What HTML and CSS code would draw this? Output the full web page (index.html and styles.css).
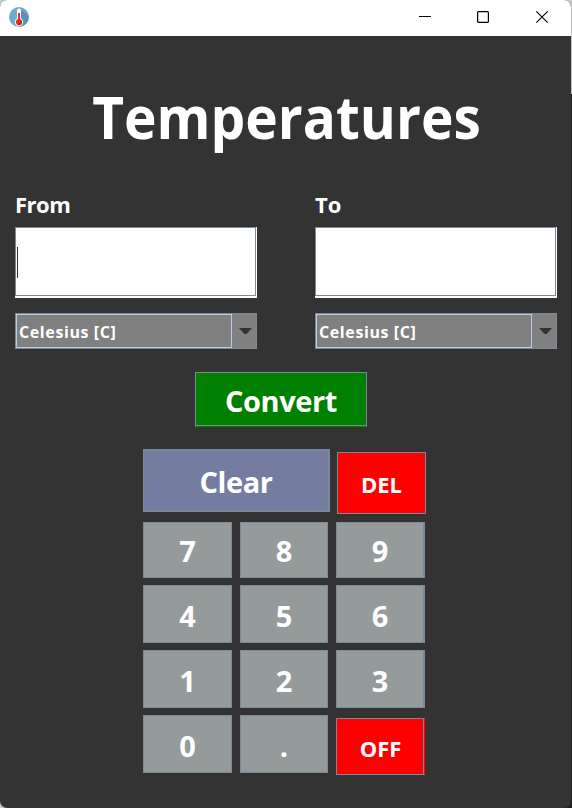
FILE: index.html
```html
<!DOCTYPE html>
<html lang="en">
<head>
<meta charset="utf-8">
<title>Temperatures</title>
<link rel="stylesheet" href="styles.css">
</head>
<body>
<div class="window">
  <header class="titlebar">
    <svg class="app-icon" width="20" height="20" viewBox="0 0 20 20">
      <circle cx="10" cy="10" r="10" fill="#6fabd0"/>
      <path d="M12 2 L19.5 9 A10 10 0 0 1 12 19.8 Z" fill="#5793b7"/>
      <path d="M8 3.500a2 2 0 0 1 4 0V12H8z" fill="#fff"/>
      <circle cx="10" cy="15" r="4" fill="#fff"/>
      <path d="M9 6h2v8H9z" fill="#e0301e"/>
      <circle cx="10" cy="15" r="3.100" fill="#e0301e"/>
      <path d="M12.700 13.500a3.100 3.100 0 0 1-4.200 4.200z" fill="#b82a1b"/>
    </svg>
    <svg class="controls" width="132" height="14" viewBox="0 0 132 14" fill="none" stroke="#000">
      <path d="M0 6.500H12" shape-rendering="crispEdges"/>
      <rect x="58.600" y="1.600" width="10.800" height="10.800" rx="1" stroke-width="1.200"/>
      <path d="M117.300 1.300 128.700 12.700M128.700 1.300 117.300 12.700" stroke-width="1.100"/>
    </svg>
  </header>
  <main class="content">
    <h1 class="title"><span>Temperatures</span></h1>
    <div class="units">
      <section class="unit">
        <label class="label from">From</label>
        <div class="field"><i class="caret"></i></div>
        <div class="combo"><span class="value">Celesius [C]</span><span class="drop"><svg width="13" height="6" viewBox="0 0 13 6"><path d="M0 0h13L7.500 6h-2z" fill="#333"/></svg></span></div>
      </section>
      <section class="unit">
        <label class="label to">To</label>
        <div class="field"></div>
        <div class="combo"><span class="value">Celesius [C]</span><span class="drop"><svg width="13" height="6" viewBox="0 0 13 6"><path d="M0 0h13L7.500 6h-2z" fill="#333"/></svg></span></div>
      </section>
    </div>
    <button class="btn convert"><span>Convert</span></button>
    <div class="actions">
      <button class="btn clear"><span>Clear</span></button>
      <button class="btn red del"><span>DEL</span></button>
    </div>
    <div class="keypad">
      <button class="btn key">7</button><button class="btn key">8</button><button class="btn key edge">9</button>
      <button class="btn key">4</button><button class="btn key">5</button><button class="btn key edge">6</button>
      <button class="btn key">1</button><button class="btn key">2</button><button class="btn key edge">3</button>
      <button class="btn key">0</button><button class="btn key">.</button><button class="btn red off"><span>OFF</span></button>
    </div>
  </main>
</div>
</body>
</html>
```
FILE: styles.css
```css
* { box-sizing: border-box; }
body {
  margin: 0;
  height: 808px;
  overflow: hidden;
  background: linear-gradient(90deg, #c8c8c8 0 560px, transparent 560px), linear-gradient(#c4c4c4 0 94px, #201e1e 94px);
  font-family: "Open Sans", "Noto Sans", sans-serif;
  font-weight: 700;
  color: #fff;
}
.window {
  width: 571px;
  height: 808px;
  border-radius: 7px;
  overflow: hidden;
  background: #333;
}
.titlebar {
  height: 36px;
  padding: 0 20px 0 9px;
  display: flex;
  align-items: center;
  justify-content: space-between;
  background: #fff;
}
.app-icon { margin-top: -2px; }
.controls { margin-top: -2px; }
.content { display: flex; flex-direction: column; }
.title {
  margin: 40px 0 0;
  width: 572px;
  height: 82px;
  font-size: 59px;
  line-height: 80px;
  text-align: center;
}
.title span { display: inline-block; transform: scaleX(.932); }
.units { display: flex; gap: 58px; padding-left: 15px; margin-top: 33px; }
.unit { width: 242px; }
.label { display: block; height: 36px; line-height: 26px; font-size: 22px; }
.from { letter-spacing: -.5px; }
.field {
  height: 71px;
  background: #fff;
  border: solid #fff;
  border-width: 0 1px 2px 0;
  box-shadow: inset 1px 1px #7a8a99, inset -1px -1px #7a8a99;
  padding: 20px 0 0 2px;
}
.caret { display: block; width: 1px; height: 31px; background: #333; }
.combo {
  height: 36px;
  margin-top: 15px;
  display: flex;
  background: #808080;
  border: 1px solid #7a8a99;
}
.value {
  width: 216px;
  border: 1px solid #b8cfe5;
  padding-left: 2px;
  font-size: 16px;
  line-height: 34px;
  letter-spacing: .6px;
}
.drop { flex: 1; display: flex; align-items: center; justify-content: center; }
.drop svg { margin-left: 2px; }
.btn {
  padding: 0;
  border: 1px solid #7a8a99;
  border-radius: 0;
  font: inherit;
  color: #fff;
  display: flex;
  align-items: center;
  justify-content: center;
}
.btn span { display: block; }
.convert {
  width: 172px;
  height: 55px;
  margin: 23px 0 0 195px;
  padding-top: 2px;
  background: #008000;
  border-bottom-color: #008000;
  box-shadow: inset 0 -1px #7a8a99;
  font-size: 29px;
  letter-spacing: -.4px;
}
.actions { display: flex; gap: 7px; margin: 22px 0 0 143px; }
.clear { width: 187px; height: 63px; background: #747da0; font-size: 29px; border-width: 1px 2px 2px 1px; padding-top: 3px; letter-spacing: -.4px; }
.red { background: #f00; font-size: 22px; }
.del { width: 89px; height: 62px; margin-top: 3px; padding-top: 2px; }
.keypad {
  display: grid;
  grid-template-columns: 89px 88px 89px;
  grid-template-rows: 56px 58px 58px 60px;
  gap: 7px 8px;
  margin: 8px 0 0 143px;
}
.key { height: 58px; background: #959a9a; font-size: 29px; padding-top: 2px; }
.key:nth-child(-n+3) { height: 56px; padding-top: 0; }
.edge { border-right-width: 2px; }
.off { margin-top: 3px; height: 57px; padding-top: 2px; border-right-color: #f00; box-shadow: inset -1px 0 #7a8a99; }
```
